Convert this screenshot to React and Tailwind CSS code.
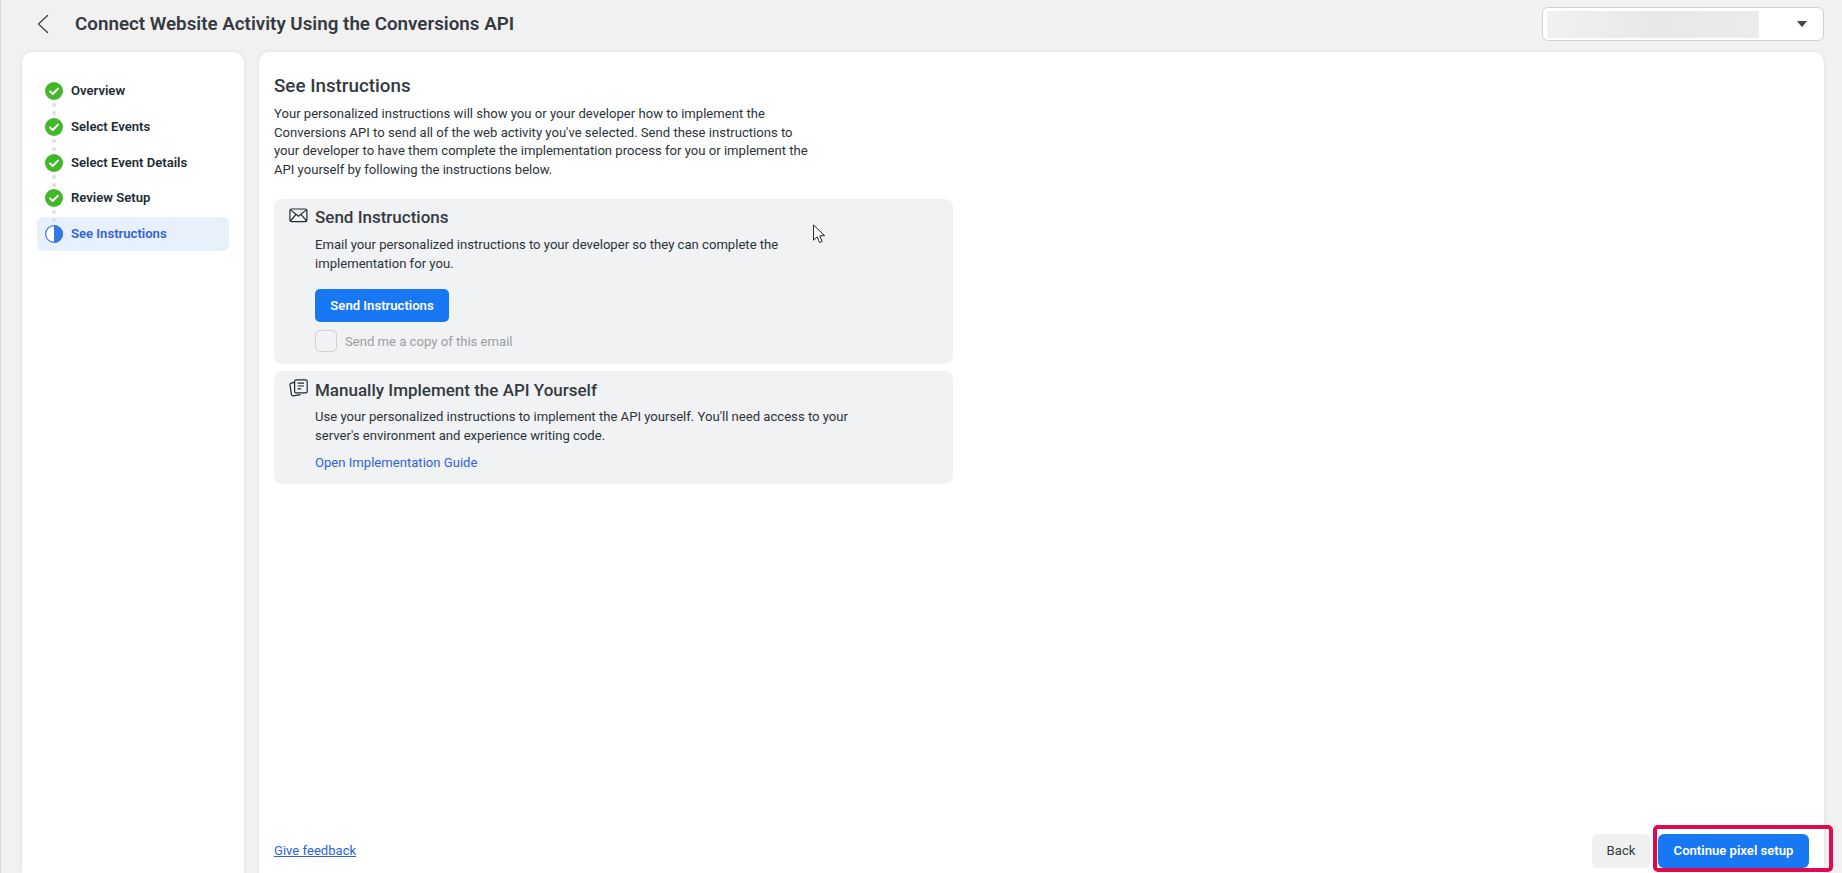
import React from "react";

function CheckStep() {
  return (
    <svg width="18" height="18" viewBox="0 0 18 18" className="shrink-0">
      <circle cx="9" cy="9" r="9" fill="#42b72a" />
      <path d="M5 9.4l2.7 2.6L13 6.6" fill="none" stroke="#fff" strokeWidth="2" strokeLinecap="round" strokeLinejoin="round" />
    </svg>
  );
}

function HalfStep() {
  return (
    <svg width="18" height="18" viewBox="0 0 18 18" className="shrink-0">
      <circle cx="9" cy="9" r="8.4" fill="#fff" stroke="#3578e5" strokeWidth="1.2" />
      <path d="M9 0a9 9 0 010 18z" fill="#3578e5" />
    </svg>
  );
}

function Step({ label, h }) {
  return (
    <div className={`relative flex items-center gap-[8px] pl-[8px] text-[13.1px] font-semibold text-[#1c2b33] ${h}`}>
      <CheckStep />
      <span>{label}</span>
      <div className="absolute left-[15px] top-[30px] flex flex-col gap-[4px]">
        <span className="block h-[4px] w-[4px] rounded-full bg-[#dcdee0]" />
        <span className="block h-[4px] w-[4px] rounded-full bg-[#dcdee0]" />
      </div>
    </div>
  );
}

function Mail() {
  return (
    <svg width="19" height="15" viewBox="0 0 19 15" fill="none" stroke="#1c2b33" strokeWidth="1.2" className="mb-[4px] shrink-0">
      <rect x="0.9" y="1" width="17" height="12.6" rx="1.6" />
      <path d="M1.3 1.6l8.2 6.6 8.2-6.6M1.3 13l5.8-6.7M17.7 13l-5.8-6.7" />
    </svg>
  );
}

function Guide() {
  return (
    <svg width="19" height="18" viewBox="0 0 19 18" fill="none" stroke="#1c2b33" strokeWidth="1.2" className="mb-[5px] shrink-0">
      <rect x="5.6" y="0.8" width="12.6" height="13" rx="1.6" />
      <path d="M8.6 4.2h6.4M8.6 7h6.4M8.6 9.8h3.6" />
      <path d="M5.6 3.4L2 4.2a1.3 1.3 0 00-1 1.5l1.4 9.7c.1.9 1 1.6 1.9 1.4l7.2-1.2" />
    </svg>
  );
}

export default function App() {
  return (
    <div className="relative flex h-[873px] w-[1842px] flex-col overflow-hidden border-l border-[#dcdcdc] bg-[#f1f1f1] font-['Roboto',sans-serif] text-[#2b3238]">
      <header className="flex h-[52px] shrink-0 items-center pr-[18px]">
        <svg width="14" height="20" viewBox="0 0 14 20" fill="none" stroke="#444950" strokeWidth="1.4" strokeLinecap="round" strokeLinejoin="round" className="mb-[4px] ml-[35px] shrink-0">
          <path d="M11.5 1.5L2.5 10l9 8.5" />
        </svg>
        <h1 className="mb-[4px] ml-[25px] text-[18.8px] font-semibold text-[#343a40]">Connect Website Activity Using the Conversions API</h1>
        <div className="mb-[4px] ml-auto flex h-[34px] w-[282px] items-center rounded-[6px] border border-[#cfd2d6] bg-white pl-[4px] pr-[16px]">
          <div className="h-[27px] w-[212px] bg-gradient-to-r from-[#f1f1f1] via-[#e8e8e6] to-[#ebebeb]" />
          <svg width="10" height="6" viewBox="0 0 10 6" className="ml-auto">
            <path d="M0 0h10L5.6 5.6a.8.8 0 01-1.2 0z" fill="#444950" />
          </svg>
        </div>
      </header>

      <div className="flex min-h-0 flex-1 gap-[15px] pl-[21px] pr-[18px]">
        <aside className="w-[222px] shrink-0 rounded-t-[10px] bg-white px-[15px] pt-[21px] shadow-[0_0_4px_rgba(0,0,0,0.08)]">
          <Step label="Overview" h="h-[36px]" />
          <Step label="Select Events" h="h-[36px]" />
          <Step label="Select Event Details" h="h-[35px]" />
          <Step label="Review Setup" h="h-[35px]" />
          <div className="mt-[2px] flex h-[34px] items-center gap-[8px] rounded-[6px] bg-[#e7f0fb] pl-[8px] text-[13.1px] font-semibold text-[#2e64d8]">
            <HalfStep />
            <span className="relative">See Instructions</span>
          </div>
        </aside>

        <main className="flex min-w-0 flex-1 flex-col rounded-t-[10px] bg-white px-[15px] pb-[5px] pt-[21px] shadow-[0_0_4px_rgba(0,0,0,0.08)]">
          <h2 className="text-[18.8px] font-medium leading-[26px] text-[#343a40]">See Instructions</h2>
          <p className="mt-[6px] w-[538px] text-[13.1px] leading-[18.6px]">
            Your personalized instructions will show you or your developer how to implement the Conversions API to send all of the web activity you've selected. Send these instructions to your developer to have them complete the implementation process for you or implement the API yourself by following the instructions below.
          </p>

          <section className="mt-[20px] h-[165px] w-[679px] rounded-[8px] bg-[#f1f2f4] pl-[15px] pt-[8px]">
            <div className="flex h-[20px] items-center gap-[7px]">
              <Mail />
              <h3 className="text-[17px] font-medium text-[#343a40]">Send Instructions</h3>
            </div>
            <p className="ml-[26px] mt-[8px] w-[470px] text-[13.1px] leading-[19px]">
              Email your personalized instructions to your developer so they can complete the implementation for you.
            </p>
            <button className="ml-[26px] mt-[16px] block h-[33px] w-[134px] rounded-[5px] bg-[#1877f2] text-[13.1px] font-semibold text-white">Send Instructions</button>
            <label className="ml-[26px] mt-[8px] flex items-center gap-[8px] text-[13.1px] text-[#9a9ea3]">
              <span className="block h-[22px] w-[22px] rounded-[5px] border border-[#ced0d4] bg-[#f1f2f4]" />
              Send me a copy of this email
            </label>
          </section>

          <section className="mt-[7px] h-[113px] w-[679px] rounded-[8px] bg-[#f1f2f4] pl-[15px] pt-[9px]">
            <div className="flex h-[20px] items-center gap-[7px]">
              <Guide />
              <h3 className="text-[17px] font-medium text-[#343a40]">Manually Implement the API Yourself</h3>
            </div>
            <p className="ml-[26px] mt-[8px] w-[560px] text-[13.1px] leading-[18.5px]">
              Use your personalized instructions to implement the API yourself. You'll need access to your server's environment and experience writing code.
            </p>
            <a className="ml-[26px] mt-[9px] block text-[13.1px] leading-[18px] text-[#2e64d8]">Open Implementation Guide</a>
          </section>

          <footer className="mt-auto flex items-center">
            <a className="text-[13.1px] text-[#2e64d8] underline">Give feedback</a>
            <button className="ml-auto h-[34px] w-[58px] rounded-[6px] bg-[#f0f0f0] text-[13.1px] text-[#343a40]">Back</button>
            <button className="ml-[8px] h-[34px] w-[151px] rounded-[6px] bg-[#1877f2] text-[13.1px] font-semibold text-white">Continue pixel setup</button>
          </footer>
        </main>
      </div>

      <div className="absolute left-[1652px] top-[825px] h-[47px] w-[180px] rounded-[5px] border-4 border-[#e0084f]" />

      <svg width="14" height="20" viewBox="0 0 14 20" className="absolute left-[811px] top-[224px]">
        <path d="M1.5 1v15.2l3.7-3.3 2.4 5.6 2.6-1.1-2.4-5.5 4.9-.3z" fill="#fff" stroke="#2b2b2b" strokeWidth="1" strokeLinejoin="round" />
      </svg>
    </div>
  );
}
